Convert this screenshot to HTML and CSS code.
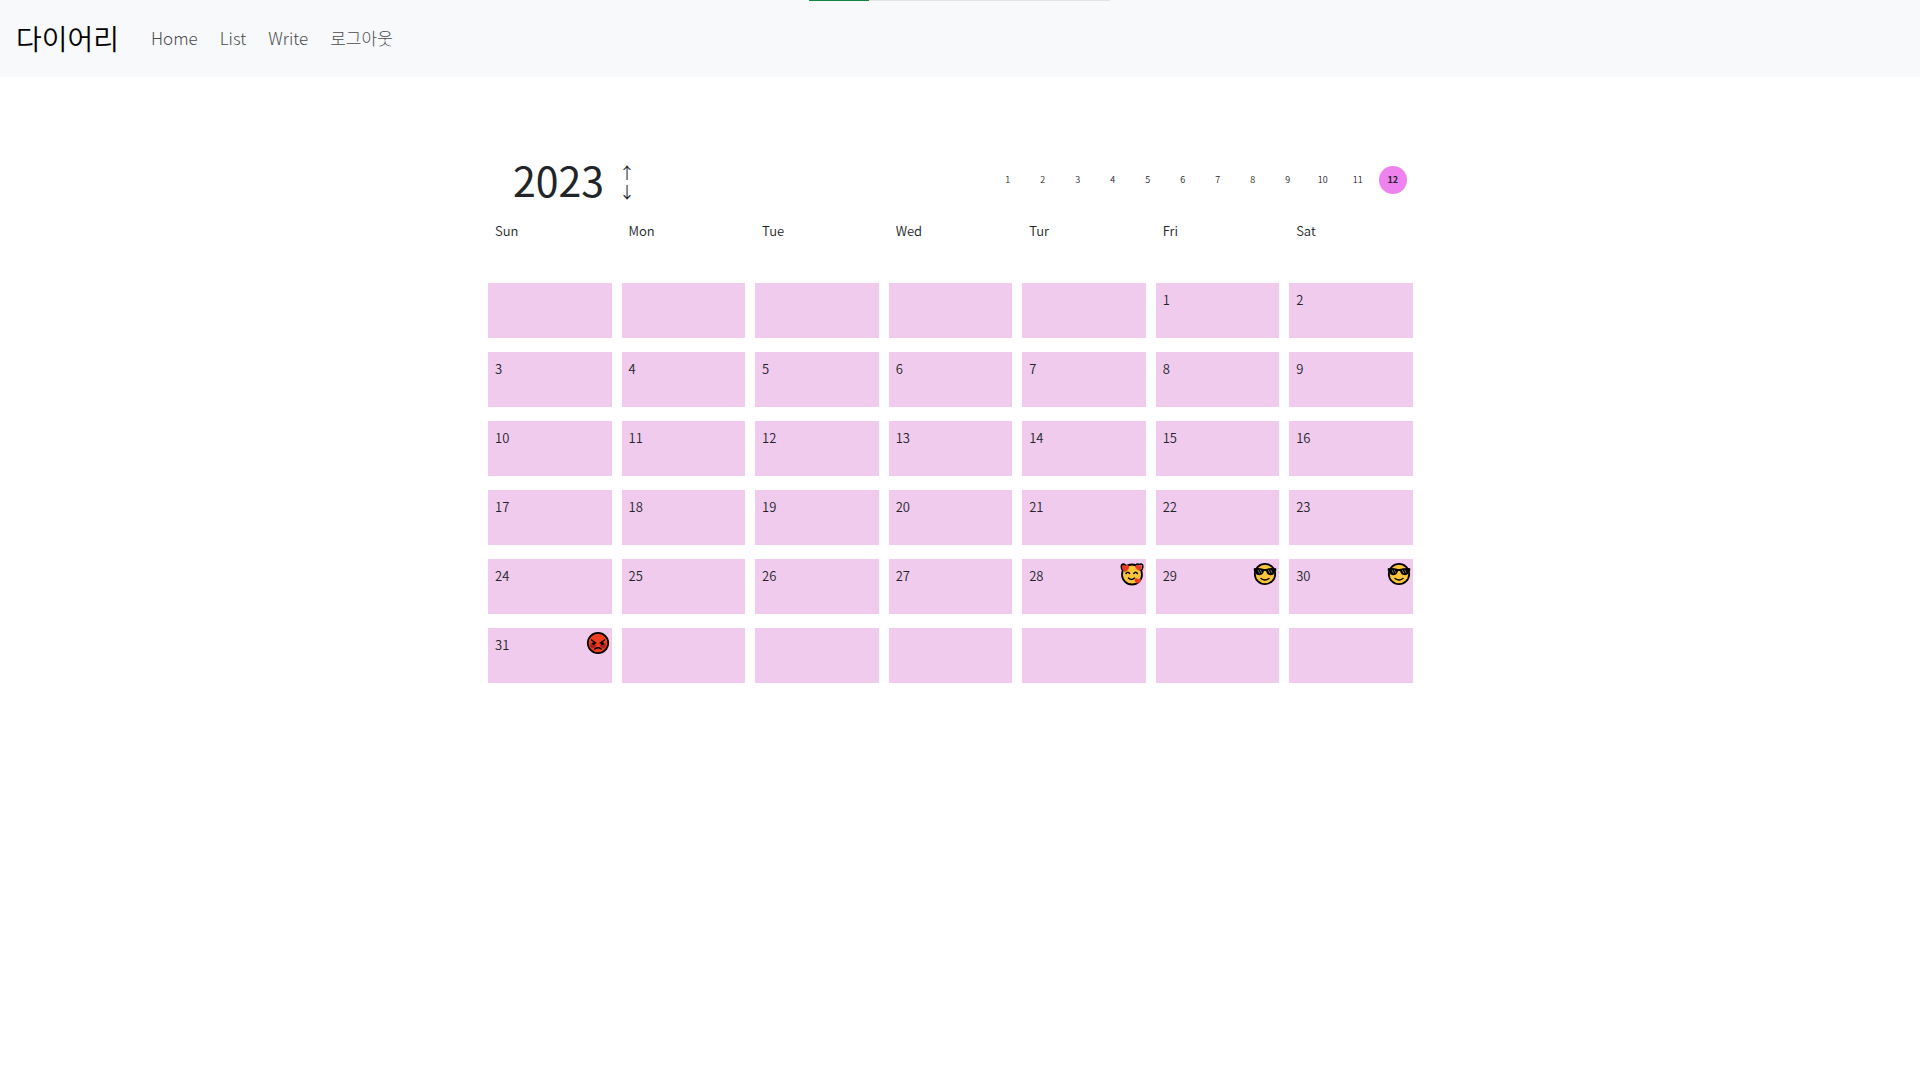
FILE: index.html
```html
<!DOCTYPE html>
<html lang="ko">
<head>
<meta charset="utf-8">
<meta name="viewport" content="width=device-width, initial-scale=1">
<title>다이어리</title>
<link rel="stylesheet" href="styles.css">
</head>
<body>
<div class="top-progress"><div class="top-progress-bar"></div></div>
<nav class="navbar">
  <a class="brand" href="#">다이어리</a>
  <a class="nav-link" href="#">Home</a>
  <a class="nav-link" href="#">List</a>
  <a class="nav-link" href="#">Write</a>
  <a class="nav-link" href="#">로그아웃</a>
</nav>

<svg class="symbols" aria-hidden="true">
  <symbol id="face-love" viewBox="0 0 24 24">
    <circle cx="12" cy="12.500" r="10" fill="#fcc43a" stroke="#000" stroke-width="1.800"/>
    <path d="M5 10C1.500 8 .8 5.500 1.300 3.800 1.900 1.800 4.600 1.600 5.600 3.300 7 2.300 9 3 9 5c0 2.200-1.500 3.700-4 5z" fill="#ea3a26"/>
    <path d="M3 9C.6 6.500.6 2.200 3.400 2c1 0 1.800.5 2.300 1.300M15.800 3C17 1.500 18.500 2 19 2.600c1.800-1.300 4.200-.3 3.900 2.200-.2 1.800-.8 3-1.800 4.300" fill="none" stroke="#000" stroke-width="1.500"/>
    <path d="M19.800 9C17 8 15 6 15.300 4.600c.4-1.800 2.600-1.900 3.400-.6 1-1.200 3.300-.7 3.300 1.100 0 1.400-.9 2.700-2.200 3.900zM17 21.500c-2-1.400-2.800-3-2.200-4.300.7-1.500 2.600-1.300 3.100.1 1-1.100 3-.8 3.100.8.100 1.600-1.600 2.800-4 3.400z" fill="#ea3a26"/>
    <path d="M6 11.500q1.800-2.500 3.600 0M13.800 11.500q1.800-2.500 3.600 0M8.500 16q3 3 6 0" fill="none" stroke="#000" stroke-width="1.500" stroke-linecap="round"/>
  </symbol>
  <symbol id="face-cool" viewBox="0 0 24 24">
    <circle cx="12" cy="12" r="10.200" fill="#fcc43a" stroke="#000" stroke-width="1.800"/>
    <path d="M.8 6.200Q6 5.400 11 7h2q5-1.600 10.200-.8v2.600l-1.300.5c-.6 3-2 4-4.400 4-2.800 0-3.800-2-4.500-4.200h-2c-.7 2.200-1.700 4.200-4.500 4.200-2.400 0-3.800-1-4.400-4L.8 8.800z"/>
    <path d="M5 7.800l1.600 3.600M7.200 7.800l1.500 3M15.300 7.800l1.600 3.600M17.600 7.800l1.400 3" stroke="#777" stroke-width="1"/>
    <path d="M8 16.500q4 3 8 0" fill="none" stroke="#000" stroke-width="1.400" stroke-linecap="round"/>
  </symbol>
  <symbol id="face-angry" viewBox="0 0 24 24">
    <circle cx="12" cy="12" r="10.200" fill="#ee3c1c" stroke="#000" stroke-width="1.800"/>
    <circle cx="7" cy="14.500" r="2.800" fill="#b01d26"/>
    <circle cx="17" cy="14.500" r="2.800" fill="#b01d26"/>
    <path d="M5.500 9l4.200 3M18.500 9l-4.200 3M8.800 18q3.200-2.500 6.400 0" fill="none" stroke="#000" stroke-width="1.500" stroke-linecap="round"/>
    <circle cx="7.700" cy="12.500" r="1.500"/>
    <circle cx="16.300" cy="12.500" r="1.500"/>
  </symbol>
</svg>

<main class="calendar">
  <header class="calendar-head">
    <h1 class="year">2023</h1>
    <div class="year-nav">
      <a href="#" aria-label="Next year">↑</a>
      <a href="#" aria-label="Previous year">↓</a>
    </div>
    <div class="months">
      <a href="#">1</a><a href="#">2</a><a href="#">3</a><a href="#">4</a><a href="#">5</a><a href="#">6</a><a href="#">7</a><a href="#">8</a><a href="#">9</a><a href="#">10</a><a href="#">11</a><a class="current" href="#">12</a>
    </div>
  </header>
  <table class="days">
    <thead>
      <tr><th>Sun</th><th>Mon</th><th>Tue</th><th>Wed</th><th>Tur</th><th>Fri</th><th>Sat</th></tr>
    </thead>
    <tbody>
      <tr><td></td><td></td><td></td><td></td><td></td><td>1</td><td>2</td></tr>
      <tr><td>3</td><td>4</td><td>5</td><td>6</td><td>7</td><td>8</td><td>9</td></tr>
      <tr><td>10</td><td>11</td><td>12</td><td>13</td><td>14</td><td>15</td><td>16</td></tr>
      <tr><td>17</td><td>18</td><td>19</td><td>20</td><td>21</td><td>22</td><td>23</td></tr>
      <tr><td>24</td><td>25</td><td>26</td><td>27</td>
        <td>28<svg class="mood"><use href="#face-love"/></svg></td>
        <td>29<svg class="mood"><use href="#face-cool"/></svg></td>
        <td>30<svg class="mood"><use href="#face-cool"/></svg></td></tr>
      <tr><td>31<svg class="mood"><use href="#face-angry"/></svg></td><td></td><td></td><td></td><td></td><td></td><td></td></tr>
    </tbody>
  </table>
</main>
</body>
</html>
```
FILE: styles.css
```css
* {
  box-sizing: border-box;
}

body {
  margin: 0;
  background: #fff;
  color: #212529;
  font-family: "Noto Sans CJK KR", sans-serif;
  font-size: 13px;
  font-weight: 350;
  line-height: 20px;
}

a {
  color: inherit;
  text-decoration: none;
}

.symbols {
  display: none;
}

.top-progress {
  position: absolute;
  top: 0;
  left: 50%;
  width: 301px;
  height: 1px;
  margin-left: -151px;
  background: #e2e3e5;
}

.top-progress-bar {
  width: 20%;
  height: 1px;
  background: #118641;
}

.navbar {
  display: flex;
  align-items: center;
  gap: 22px;
  height: 77px;
  padding: 0 16px 2px;
  background: #f8f9fb;
  color: #4a4b4c;
  font-size: 17px;
  font-weight: 300;
}

.brand {
  margin-right: 10px;
  color: #000;
  font-size: 28px;
  font-weight: 350;
  line-height: 40px;
}

.calendar {
  width: 49.2%;
  margin: 75px 0 0 24.9%;
}

.calendar-head {
  display: flex;
  align-items: center;
  height: 56px;
  padding: 0 16px 0 35px;
}

.year {
  margin: 0;
  font-size: 41px;
  font-weight: 400;
  line-height: 54px;
  padding-bottom: 2px;
}

.year-nav {
  display: flex;
  flex-direction: column;
  margin: 4px 0 0 15px;
  font-size: 16px;
  line-height: 19px;
}

.months {
  display: flex;
  gap: 7px;
  margin-left: auto;
}

.months a {
  width: 28px;
  border-radius: 50%;
  font-size: 9px;
  line-height: 28px;
  text-align: center;
}

.months .current {
  background: violet;
  font-weight: 700;
}

.days {
  width: 100%;
  border-spacing: 10px 14px;
  margin-top: -8px;
  table-layout: fixed;
}

.days th,
.days td {
  position: relative;
  height: 55px;
  padding: 7px;
  font-weight: 350;
  text-align: left;
  vertical-align: top;
}

.days td {
  background: #f1cbed;
}

.mood {
  position: absolute;
  top: 3px;
  right: 2px;
  width: 24px;
  height: 24px;
}
```
